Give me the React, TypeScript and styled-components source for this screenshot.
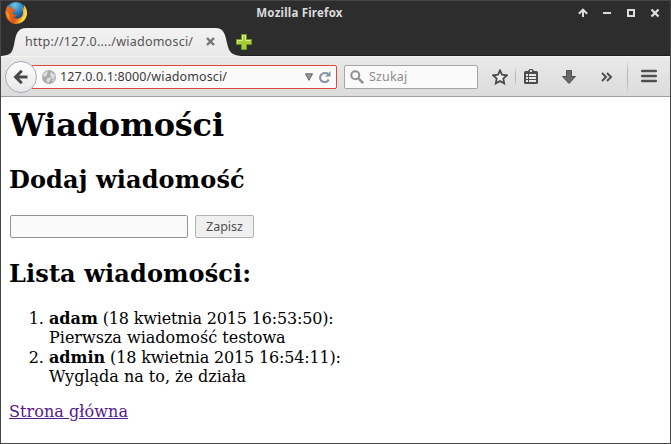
import React from "react";
import styled, { createGlobalStyle } from "styled-components";

const GlobalStyle = createGlobalStyle`
  * { box-sizing: border-box; }
  body { margin: 0; overflow: hidden; background: #fff; }
`;

const uiFont = `"Noto Sans", "Open Sans", sans-serif`;

const Window = styled.div`
  width: 671px;
  height: 444px;
  display: flex;
  flex-direction: column;
  border: 1px solid #454545;
  background: #fff;
  font-family: ${uiFont};
`;

const TitleBar = styled.header`
  height: 27px;
  display: grid;
  grid-template-columns: 90px 1fr 90px;
  flex: none;
  background: #2d2d2d;
`;

const AppIcon = styled.svg`
  width: 24px;
  height: 24px;
  margin-left: 3px;
`;

const WindowTitle = styled.div`
  justify-self: center;
  padding-right: 72px;
  color: #dcdcdc;
  font-size: 11.5px;
  font-weight: 700;
  line-height: 24px;
  letter-spacing: 0.2px;
  white-space: nowrap;
`;

const WindowControls = styled.div`
  display: flex;
  justify-content: space-between;
  padding: 7px 10px 0 0;
  margin-left: -2px;
  height: 17px;
`;

const ControlIcon = styled.svg`
  width: 10px;
  height: 10px;
  flex: none;
`;

const TabStrip = styled.div`
  height: 28px;
  flex: none;
  display: flex;
  background: #2d2d2d;
  border-bottom: 1px solid #202020;
`;

const Tab = styled.div`
  position: relative;
  width: 240px;
  height: 28px;
  display: flex;
  align-items: flex-start;
  padding: 0 0 0 24px;
  color: #555;
  font-size: 12.5px;
  line-height: 27px;
`;

const TabShape = styled.svg`
  position: absolute;
  inset: 0;
  width: 240px;
  height: 28px;
`;

const TabTitle = styled.span`
  position: relative;
  width: 181px;
  letter-spacing: 0.24px;
  white-space: nowrap;
`;

const CloseIcon = styled.svg`
  position: relative;
  width: 9px;
  height: 9px;
  margin-top: 9px;
`;

const NewTabIcon = styled.svg`
  width: 18px;
  height: 18px;
  margin: 5px 0 0 -6px;
`;

const Toolbar = styled.div`
  height: 41px;
  flex: none;
  display: flex;
  align-items: center;
  padding-left: 4px;
  background: linear-gradient(#e9e9e9, #dcdcdc);
  border-top: 1px solid #f4f4f4;
  border-bottom: 1px solid #a0a0a0;
`;

const BackButton = styled.button`
  width: 32px;
  height: 32px;
  flex: none;
  padding: 0;
  border: 1px solid #a3adb8;
  border-radius: 50%;
  background: linear-gradient(#fdfdfd, #e8e8e8);
  z-index: 1;
  display: grid;
  place-items: center;
`;

const AddressBar = styled.div`
  width: 306px;
  height: 24px;
  margin-left: -6px;
  flex: none;
  display: flex;
  align-items: center;
  padding-left: 10px;
  background: #fafafa;
  border: 1px solid #da4a3b;
  border-radius: 2px;
`;

const Address = styled.span`
  width: 249px;
  padding-left: 4px;
  color: #3c3c3c;
  font-size: 12.5px;
  line-height: 22px;
  letter-spacing: 0.12px;
`;

const SearchBar = styled.div`
  width: 134px;
  height: 24px;
  margin-left: 7px;
  flex: none;
  display: flex;
  align-items: center;
  gap: 5px;
  padding-left: 5px;
  border: 1px solid #a6a6a6;
  border-radius: 2px;
  background: #fafafa;
  color: #8c8c8c;
  font-size: 12.5px;
  line-height: 22px;
  letter-spacing: 0.15px;
`;

const Icon = styled.svg<{ $size: number; $gap?: number }>`
  width: ${(p) => p.$size}px;
  height: ${(p) => p.$size}px;
  margin-left: ${(p) => p.$gap ?? 0}px;
  flex: none;
`;

const Divider = styled.i<{ $height: number; $gap: number }>`
  width: 1px;
  height: ${(p) => p.$height}px;
  margin-left: ${(p) => p.$gap}px;
  flex: none;
  background: linear-gradient(#c9cbce00, #b4b8bd 30%, #b4b8bd 70%, #c9cbce00);
`;

const Page = styled.main`
  flex: 1;
  padding: 9px 8px 8px;
  color: #000;
  font-family: "DejaVu Serif", serif;
  font-size: 16px;
  line-height: 19px;
`;

const Heading = styled.h1`
  margin: 0 0 22px;
  font-size: 32px;
  line-height: 38px;
  letter-spacing: -0.2px;
`;

const Subheading = styled.h2`
  margin: 0 0 21px;
  font-size: 24px;
  line-height: 28px;
  letter-spacing: 0.13px;
`;

const MessageForm = styled.form`
  display: flex;
  gap: 7px;
  height: 24px;
  margin: 0 0 21px 1px;
`;

const MessageInput = styled.input`
  width: 178px;
  height: 23px;
  padding: 0 4px;
  border: 1px solid #929292;
  border-radius: 2px;
  background: #fafafa;
`;

const SaveButton = styled.button`
  width: 59px;
  height: 23px;
  padding: 0;
  border: 1px solid #b1b1b1;
  border-radius: 2px;
  background: #efefef;
  color: #505050;
  font: 12.5px/20px ${uiFont};
`;

const MessageList = styled.ol`
  margin: 0 0 15px;
  padding-left: 40px;
`;

const Message = styled.li`
  height: 39px;
`;

const MessageDate = styled.span`
  letter-spacing: -0.17px;
`;

const HomeLink = styled.a`
  color: #551a8b;
  text-decoration: underline;
  letter-spacing: 0.06px;
`;

const messages = [
  { author: "adam", date: "18 kwietnia 2015 16:53:50", text: "Pierwsza wiadomość testowa" },
  { author: "admin", date: "18 kwietnia 2015 16:54:11", text: "Wygląda na to, że działa" },
];

function FirefoxLogo() {
  return (
    <AppIcon viewBox="0 0 24 24">
      <defs>
        <radialGradient id="globe" cx=".45" cy=".15" r=".8">
          <stop offset="0" stopColor="#72c5e8" />
          <stop offset=".5" stopColor="#2377b7" />
          <stop offset="1" stopColor="#15264f" />
        </radialGradient>
        <linearGradient id="fox" x1="0" y1="0" x2="1" y2=".3">
          <stop offset="0" stopColor="#e87825" />
          <stop offset=".6" stopColor="#df5314" />
          <stop offset="1" stopColor="#ffdd3c" />
        </linearGradient>
      </defs>
      <circle cx="12" cy="11.5" r="10.5" fill="url(#globe)" />
      <path d="M4 4 2.5 7Q-.1 13 3.4 18.2 8 24.5 15.2 22.5 22 20.3 23 13 23.3 8 20 4.2L20.6 9Q18.8 6.2 17.5 6 21 12.5 17.3 16.1 13 19.3 9.2 15.8 11.3 16.2 13.4 14.5 11 14.3 8.9 12.8L8.8 11.2 11.6 9.7 9 7.7 8.2 5.5Q6.6 6 6 7 4.5 6.4 4 4Z" fill="url(#fox)" />
      <path d="M20 4.2Q23.4 8 22.6 13.5 21 20.3 14.5 21.3 21.5 17.5 20.6 9Z" fill="#ffd642" />
      <path d="M2.5 10Q2 17 8.2 20 4.7 17.5 5 13.3Z" fill="#fa9d27" />
    </AppIcon>
  );
}

export default function App() {
  return (
    <>
      <GlobalStyle />
      <Window>
        <TitleBar>
          <FirefoxLogo />
          <WindowTitle>Mozilla Firefox</WindowTitle>
          <WindowControls>
            <ControlIcon viewBox="0 0 10 10"><path d="M5 9V2M.8 5.7 5 1.7l4.2 4" fill="none" stroke="#dcdcdc" strokeWidth="2" /></ControlIcon>
            <ControlIcon viewBox="0 0 10 10"><path d="M1 4h8v2H1z" fill="#dcdcdc" /></ControlIcon>
            <ControlIcon viewBox="0 0 10 10"><path d="M2 2h6v6H2z" fill="none" stroke="#dcdcdc" strokeWidth="2" /></ControlIcon>
            <ControlIcon viewBox="0 0 10 10"><path d="m1.5 1.5 7 7m0-7-7 7" stroke="#dcdcdc" strokeWidth="2.4" /></ControlIcon>
          </WindowControls>
        </TitleBar>
        <TabStrip>
          <Tab>
            <TabShape viewBox="0 0 240 28">
              <defs><linearGradient id="tab" x2="0" y2="1"><stop stopColor="#f2f2f2" /><stop offset="1" stopColor="#e9e9e9" /></linearGradient></defs>
              <path d="M0 28C10 27 11 25 13 17 15 6 16 0 26 0H214C223 0 224 6 226 15 228 24 230 27 240 28Z" fill="url(#tab)" />
            </TabShape>
            <TabTitle>http://127.0..../wiadomosci/</TabTitle>
            <CloseIcon viewBox="0 0 9 9"><path d="m1 1 7 7m0-7-7 7" stroke="#747474" strokeWidth="2.4" /></CloseIcon>
          </Tab>
          <NewTabIcon viewBox="0 0 18 18"><path d="M6.5 1.5h5v5h5v5h-5v5h-5v-5h-5v-5h5z" fill="#a6cd36" stroke="#6c9727" /><path d="M7.5 7.5v-5h3v5h5" fill="none" stroke="#d8eb8f" /><path d="M2.5 10.5v-3h5" fill="none" stroke="#d8eb8f" /></NewTabIcon>
        </TabStrip>
        <Toolbar>
          <BackButton aria-label="Wstecz">
            <Icon $size={16} viewBox="0 0 16 16"><path d="M14.5 8H3M8.8 1.8 2.6 8l6.2 6.2" fill="none" stroke="#484848" strokeWidth="3" /></Icon>
          </BackButton>
          <AddressBar>
            <Icon $size={14} viewBox="0 0 14 14"><circle cx="7" cy="7" r="7" fill="#aaa" /><path d="M2 3 6 1 5 5 3 7 1 6ZM9 2l4 3-1 4-3-1-1 3-2 2-2-3 2-2 4-1-2-2ZM10 10l3-1-2 3Z" fill="#dedede" /></Icon>
            <Address>127.0.0.1:8000/wiadomosci/</Address>
            <Icon $size={8} viewBox="0 0 8 8"><path d="M.5.8h7L4 7.3Z" fill="#999" stroke="#666" /></Icon>
            <Icon $size={12} $gap={6} viewBox="0 0 12 12"><path d="M9.7 8.5A4.5 4.5 0 1 1 6.5 2.2H9" fill="none" stroke="#8796a4" strokeWidth="2.1" /><path d="M11.5 0v5.6H6Z" fill="#8796a4" /></Icon>
          </AddressBar>
          <SearchBar>
            <Icon $size={14} viewBox="0 0 14 14"><circle cx="5.3" cy="5.3" r="4" fill="none" stroke="#929292" strokeWidth="2" /><path d="m8.2 8.2 5 5" stroke="#929292" strokeWidth="2.5" /></Icon>
            Szukaj
          </SearchBar>
          <Icon $size={16} $gap={14} viewBox="0 0 16 16"><path d="m8 1.5 2 4.2 4.8.6-3.5 3.3.9 4.8L8 12l-4.2 2.4.9-4.8-3.5-3.3L6 5.7Z" fill="#ededed" stroke="#4b4b4b" strokeWidth="1.8" /></Icon>
          <Divider $height={19} $gap={7} />
          <Icon $size={16} $gap={7} viewBox="0 0 16 16"><path d="M2.5 2H5l1.5-2h3L11 2h2.5Q15 2 15 3.5v10q0 1.5-1.5 1.5h-11Q1 15 1 13.5v-10Q1 2 2.5 2Z" fill="#4c4c4c" /><path d="M3 5h2v2H3zm3 0h7v2H6zM3 8h2v2H3zm3 0h7v2H6zM3 11h2v2H3zm3 0h7v2H6z" fill="#e8e8e8" /><path d="M7 1h2v2H7z" fill="#ddd" /></Icon>
          <Icon $size={16} $gap={22} viewBox="0 0 16 16"><path d="M5.5 1.5h5v6h4L8 14.5 1.5 7.5h4Z" fill="#686868" stroke="#505050" /></Icon>
          <Icon $size={14} $gap={23} viewBox="0 0 14 14"><path d="m2 3 4 4-4 4m5-8 4 4-4 4" fill="none" stroke="#505050" strokeWidth="2" /></Icon>
          <Divider $height={34} $gap={13} />
          <Icon $size={16} $gap={13} viewBox="0 0 16 16"><path d="M1.2 2h13.6M1.2 7h13.6M1.2 12h13.6" stroke="#505050" strokeWidth="2.6" strokeLinecap="round" /></Icon>
        </Toolbar>
        <Page>
          <Heading>Wiadomości</Heading>
          <Subheading>Dodaj wiadomość</Subheading>
          <MessageForm>
            <MessageInput aria-label="Wiadomość" />
            <SaveButton type="button">Zapisz</SaveButton>
          </MessageForm>
          <Subheading>Lista wiadomości:</Subheading>
          <MessageList>
            {messages.map((m) => (
              <Message key={m.author}>
                <b>{m.author}</b><MessageDate> ({m.date}):</MessageDate><br />
                {m.text}
              </Message>
            ))}
          </MessageList>
          <HomeLink href="#">Strona główna</HomeLink>
        </Page>
      </Window>
    </>
  );
}
